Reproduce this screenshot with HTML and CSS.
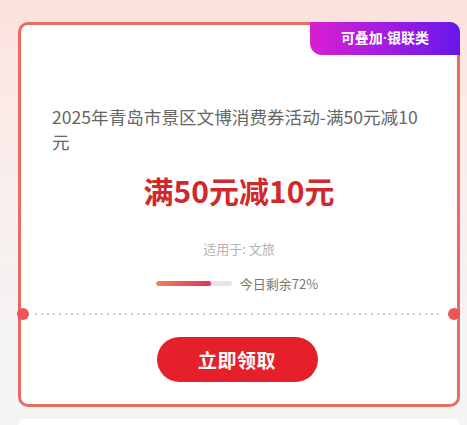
FILE: index.html
```html
<!DOCTYPE html>
<html lang="zh-CN">
<head>
<meta charset="utf-8">
<title>消费券</title>
<link rel="stylesheet" href="styles.css">
</head>
<body>
<div class="page">
  <div class="card">
    <div class="badge">可叠加·银联类</div>
    <div class="title">2025年青岛市景区文博消费券活动-满50元减10元</div>
    <div class="amount">满50元减10元</div>
    <div class="scope">适用于: 文旅</div>
    <div class="progress-row">
      <div class="track"><div class="fill" style="width:72%"></div></div>
      <span class="remain">今日剩余72%</span>
    </div>
    <div class="sep">
      <span class="notch notch-left"></span>
      <span class="dots"></span>
      <span class="notch notch-right"></span>
    </div>
    <div class="btn-row"><button class="btn">立即领取</button></div>
  </div>
  <div class="card next"></div>
</div>
</body>
</html>
```
FILE: styles.css
```css
* { box-sizing: border-box; }
html, body { margin: 0; padding: 0; }
body {
  width: 467px;
  height: 425px;
  overflow: hidden;
  font-family: "Noto Sans CJK SC", "Noto Sans", sans-serif;
  background: linear-gradient(180deg, #fbe0db 0px, #fce8e4 70px, #f8f0ef 220px, #f4f4f4 380px);
}
.page {
  padding: 22px 7px 0 18px;
}
.card {
  position: relative;
  width: 442px;
  background: #fff;
  border: 3px solid #e86b64;
  border-radius: 10px;
  padding: 79px 0 22px;
}
.badge {
  position: absolute;
  top: -3px;
  right: -3px;
  width: 150px;
  height: 33px;
  line-height: 33px;
  text-align: center;
  color: #fff;
  font-family: "Roboto", "Noto Sans CJK SC", sans-serif;
  font-size: 14px;
  font-weight: 700;
  background: linear-gradient(90deg, #d71fcf 0%, #a21de0 50%, #6717ea 100%);
  border-radius: 0 10px 0 12px;
}
.title {
  padding: 0 31px;
  font-size: 17.6px;
  line-height: 25px;
  color: #666;
}
.amount {
  margin-top: 16px;
  text-align: center;
  font-size: 30px;
  line-height: 40px;
  font-weight: 700;
  color: #d1282d;
}
.scope {
  margin-top: 29px;
  text-align: center;
  font-size: 13px;
  line-height: 20px;
  color: #b3b3b3;
}
.progress-row {
  margin-top: 14px;
  height: 20px;
  display: flex;
  align-items: center;
  justify-content: center;
  gap: 8px;
  padding-right: 4px;
}
.track {
  width: 76px;
  height: 5px;
  border-radius: 3px;
  background: #e6e6e6;
  overflow: hidden;
}
.fill {
  height: 100%;
  border-radius: 3px;
  background: linear-gradient(90deg, #f0805e, #e3325a);
}
.remain {
  font-size: 13px;
  color: #777;
}
.sep {
  position: relative;
  margin-top: 20px;
  height: 2px;
  display: flex;
  align-items: center;
}
.dots {
  flex: 1;
  margin: 0 17px 0 14px;
  height: 1.5px;
  background: linear-gradient(90deg, #cfcfcf 2px, transparent 2px) 0 0 / 6px 100% repeat-x;
}
.notch {
  position: absolute;
  top: 50%;
  width: 12px;
  height: 12px;
  margin-top: -6px;
  border-radius: 50%;
  background: #ef5558;
}
.notch-left { left: -4px; }
.notch-right { right: -3px; }
.btn-row {
  margin-top: 22px;
  display: flex;
  justify-content: center;
  padding-right: 4px;
}
.btn {
  width: 161px;
  height: 45px;
  border: none;
  border-radius: 23px;
  background: #e6202a;
  color: #fff;
  font-family: inherit;
  font-size: 19px;
  font-weight: 700;
  letter-spacing: 0.5px;
  padding: 0;
}
.card.next {
  margin-top: 12px;
  border: none;
  border-radius: 8px 8px 0 0;
  height: 7px;
  padding: 0;
}
```
